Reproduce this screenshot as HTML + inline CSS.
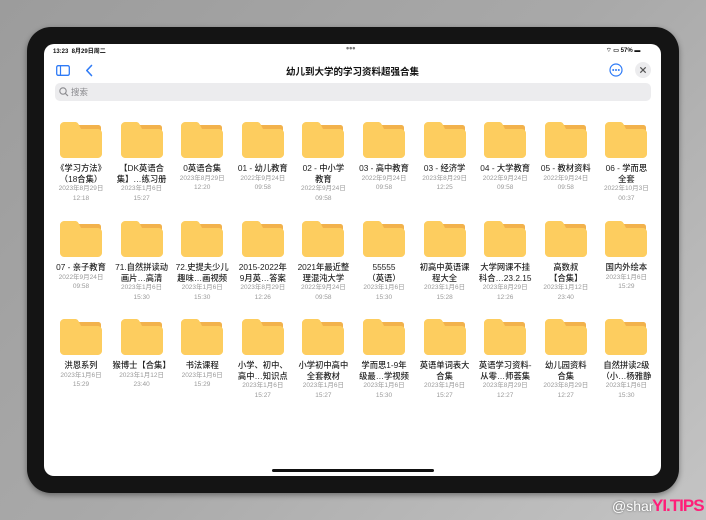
<!DOCTYPE html>
<html><head><meta charset="utf-8"><style>
*{margin:0;padding:0;box-sizing:border-box}
body{width:706px;height:520px;overflow:hidden;background:linear-gradient(135deg,#9c9c9c 0%,#a9a9a9 50%,#c4c4c4 100%);font-family:"Liberation Sans","Noto Sans CJK SC",sans-serif;position:relative}
.bezel{position:absolute;left:27px;top:27px;width:652px;height:466px;background:#141414;border-radius:24px;box-shadow:0 2px 6px rgba(0,0,0,.4)}
.screen{position:absolute;left:44px;top:44px;width:617px;height:432px;background:#fff;border-radius:10px;overflow:hidden}
.st{position:absolute;top:2px;font-size:6px;font-weight:bold;color:#111}
.title{position:absolute;top:20px;left:0;width:100%;text-align:center;font-size:9.5px;font-weight:bold;color:#111}
.search{position:absolute;left:11px;top:39px;width:596px;height:18px;background:#ececee;border-radius:5px;font-size:8.5px;color:#8a8a8e;padding-left:16px;line-height:18px}
.cell{position:absolute;width:64px;text-align:center}
.cell svg{display:block;margin:0 auto}
.n{font-size:8.3px;color:#222;line-height:10.5px;margin-top:5px;font-weight:500}
.d{font-size:6.5px;color:#9a9a9a;line-height:9.7px}
.home{position:absolute;left:228px;top:425px;width:162px;height:3px;background:#111;border-radius:2px}
.wm{position:absolute;left:612px;top:498px;font-size:14px;color:#fff;text-shadow:0 0 2px #555}
.yt{position:absolute;left:652px;top:496px;font-size:17px;font-weight:bold;color:#ff1e78;letter-spacing:-1px}
</style></head><body>
<div class="bezel"></div>
<div class="screen">
<div class="st" style="left:9px">13:23&nbsp;&nbsp;8月29日周二</div>
<div class="st" style="left:302px;font-size:9px;top:-1px;color:#777">•••</div>
<div class="st" style="left:562px">⌔ ▭ 57% ▬</div>
<svg style="position:absolute;left:12px;top:21px" width="14" height="11"><rect x="0.7" y="0.7" width="12.6" height="9.6" rx="1.5" fill="none" stroke="#2f7bf6" stroke-width="1.3"/><line x1="4.5" y1="1" x2="4.5" y2="10" stroke="#2f7bf6" stroke-width="1.2"/></svg>
<svg style="position:absolute;left:41px;top:20px" width="8" height="13"><path d="M6.5 1.5 L1.8 6.5 L6.5 11.5" fill="none" stroke="#2f7bf6" stroke-width="1.6" stroke-linecap="round" stroke-linejoin="round"/></svg>
<div class="title">幼儿到大学的学习资料超强合集</div>
<svg style="position:absolute;left:565px;top:19px" width="14" height="14"><circle cx="7" cy="7" r="6" fill="none" stroke="#2f7bf6" stroke-width="1.2"/><circle cx="4.2" cy="7" r="1" fill="#2f7bf6"/><circle cx="7" cy="7" r="1" fill="#2f7bf6"/><circle cx="9.8" cy="7" r="1" fill="#2f7bf6"/></svg>
<svg style="position:absolute;left:591px;top:18px" width="16" height="16"><circle cx="8" cy="8" r="8" fill="#ececee"/><path d="M5.3 5.3L10.7 10.7M10.7 5.3L5.3 10.7" stroke="#555" stroke-width="1.2"/></svg>
<div class="search">搜索</div>
<svg style="position:absolute;left:15px;top:43px" width="10" height="10"><circle cx="4" cy="4" r="3.2" fill="none" stroke="#8a8a8e" stroke-width="1.1"/><line x1="6.4" y1="6.4" x2="9" y2="9" stroke="#8a8a8e" stroke-width="1.2"/></svg>
<div class="home"></div>
<div id="g"></div>
</div>
<div class="wm">@shar</div><div class="yt">YI.TIPS</div>
<script>
var rows=[
[["《学习方法》","（18合集）","2023年8月29日","12:18"],["【DK英语合","集】…练习册","2023年1月6日","15:27"],["0英语合集","","2023年8月29日","12:20"],["01 - 幼儿教育","","2022年9月24日","09:58"],["02 - 中小学","教育","2022年9月24日","09:58"],["03 - 高中教育","","2022年9月24日","09:58"],["03 - 经济学","","2023年8月29日","12:25"],["04 - 大学教育","","2022年9月24日","09:58"],["05 - 教材资料","","2022年9月24日","09:58"],["06 - 学而思","全套","2022年10月3日","00:37"]],
[["07 - 亲子教育","","2022年9月24日","09:58"],["71.自然拼读动","画片…高清","2023年1月6日","15:30"],["72.史提夫少儿","趣味…画视频","2023年1月6日","15:30"],["2015-2022年","9月英…答案","2023年8月29日","12:26"],["2021年最近整","理混沌大学","2022年9月24日","09:58"],["55555","（英语）","2023年1月6日","15:30"],["初高中英语课","程大全","2023年1月6日","15:28"],["大学网课不挂","科合…23.2.15","2023年8月29日","12:26"],["高数叔","【合集】","2023年1月12日","23:40"],["国内外绘本","","2023年1月6日","15:29"]],
[["洪恩系列","","2023年1月6日","15:29"],["猴博士【合集】","","2023年1月12日","23:40"],["书法课程","","2023年1月6日","15:29"],["小学、初中、","高中…知识点","2023年1月6日","15:27"],["小学初中高中","全套教材","2023年1月6日","15:27"],["学而思1-9年","级最…学视频","2023年1月6日","15:30"],["英语单词表大","合集","2023年1月6日","15:27"],["英语学习资料-","从零…师荟集","2023年8月29日","12:27"],["幼儿园资料","合集","2023年8月29日","12:27"],["自然拼读2级","（小…杨雅静","2023年1月6日","15:30"]]];
var tops=[78,177,275],h="";
var f='<svg width="42" height="36" viewBox="0 0 42 36"><path d="M18 3h20c2 0 3 1 3 3v6H18z" fill="#f2b24c"/><path d="M4 0h11c2 0 3 1 4 3l2 4h17c2 0 4 2 4 4v21c0 2-2 4-4 4H4c-2 0-4-2-4-4V4c0-2 2-4 4-4z" fill="#fdcd5f"/></svg>';
rows.forEach(function(r,ri){r.forEach(function(c,ci){var cx=37+ci*60.6;
var nm=c[0]+(c[1]?"<br>"+c[1]:"");
h+='<div class="cell" style="left:'+(cx-32)+'px;top:'+tops[ri]+'px">'+f+'<div class="n">'+nm+'</div><div class="d">'+c[2]+'<br>'+c[3]+'</div></div>';});});
document.getElementById("g").innerHTML=h;
</script>
</body></html>
